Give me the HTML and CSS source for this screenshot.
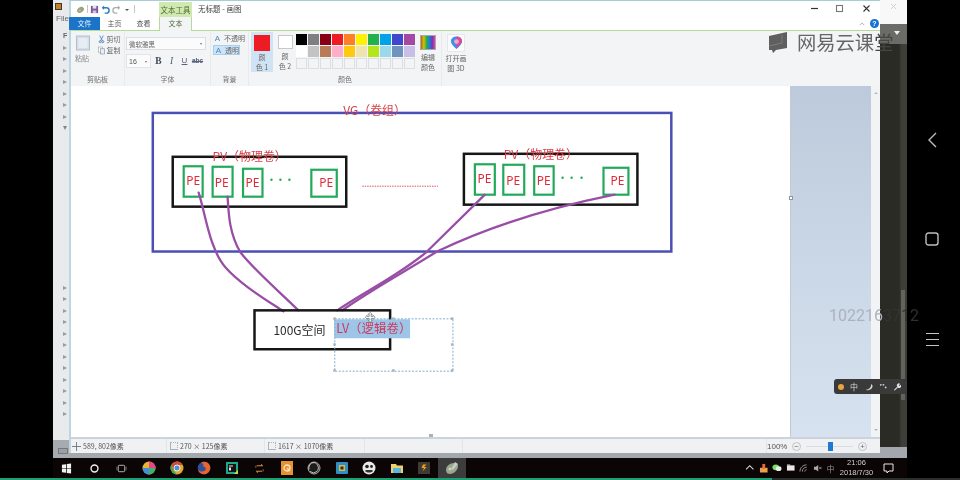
FILE: index.html
```html
<!DOCTYPE html>
<html lang="zh-CN">
<head>
<meta charset="utf-8">
<title>无标题 - 画图</title>
<link rel="stylesheet" href="styles.css">
</head>
<body>
<div class="screen">
  <div class="main">
    <div class="black-side"></div>
    <div class="desktop">
      <div class="desk-row">
        <aside class="strip">
          <div class="strip-top">
            <span class="app-dot"></span>
            <span class="file-word">File</span>
            <span class="fc-word">F</span>
          </div>
          <div class="arrows arrows-a">
            <i class="arr"></i><i class="arr"></i><i class="arr"></i><i class="arr"></i><i class="arr"></i><i class="arr"></i><i class="arr"></i><i class="arr arr-d"></i>
          </div>
          <div class="arrows arrows-b">
            <i class="arr"></i><i class="arr"></i><i class="arr"></i><i class="arr"></i><i class="arr"></i><i class="arr"></i><i class="arr"></i><i class="arr"></i><i class="arr"></i><i class="arr"></i><i class="arr"></i><i class="arr"></i>
          </div>
          <div class="strip-bottom"><span class="strip-btn"></span></div>
        </aside>

        <section class="window">
          <div class="titlebar">
            <div class="qat">
              <svg class="qi" viewBox="0 0 10 10"><path d="M1 7c0-3 3-5 6-5l2 2c0 3-3 5-6 5z" fill="#98a27e"/><circle cx="4" cy="6" r="1.4" fill="#c9b58c"/></svg>
              <span class="qsep"></span>
              <svg class="qi" viewBox="0 0 10 10"><path d="M1 1h8v8H1z" fill="#7a5a9c"/><path d="M3 1h4v3H3z" fill="#e6e0ee"/><path d="M3 6h4v3H3z" fill="#cfc4dc"/></svg>
              <svg class="qi" viewBox="0 0 10 10"><path d="M2 3h4a3 3 0 0 1 0 6H4" fill="none" stroke="#2b7cc4" stroke-width="1.6"/><path d="M3.5 0.5v5L0.8 3z" fill="#2b7cc4"/></svg>
              <svg class="qi" viewBox="0 0 10 10"><path d="M8 3H4a3 3 0 0 0 0 6h2" fill="none" stroke="#a8acb2" stroke-width="1.4"/><path d="M6.500 0.5v5L9.200 3z" fill="#a8acb2"/></svg>
              <span class="qdrop"></span>
              <span class="qsep"></span>
            </div>
            <div class="ctx-tab">文本工具</div>
            <div class="doc-title">无标题 - 画图</div>
            <div class="win-controls">
              <svg class="wc wc-min" viewBox="0 0 9 9"><path d="M1 4.500h7" stroke="#333" stroke-width="1.200"/></svg>
              <svg class="wc wc-max" viewBox="0 0 9 9"><rect x="1.500" y="1.500" width="6" height="6" fill="none" stroke="#777" stroke-width="1.100"/></svg>
              <svg class="wc" viewBox="0 0 9 9"><path d="M1.500 1.500l6 6M7.500 1.500l-6 6" stroke="#333" stroke-width="1.100"/></svg>
            </div>
          </div>

          <div class="tabs">
            <div class="tab tab-file">文件</div>
            <div class="tab tab-plain">主页</div>
            <div class="tab tab-plain tab-view">查看</div>
            <div class="tab tab-text">文本</div>
            <div class="tab-help">
              <svg class="caret-up" viewBox="0 0 8 5"><path d="M1 4l3-3 3 3" fill="none" stroke="#9a9a9a"/></svg>
              <span class="help">?</span>
            </div>
          </div>

          <div class="ribbon">
            <div class="group g-clip">
              <div class="g-body clip-body">
                <div class="paste">
                  <svg class="paste-ico" viewBox="0 0 15 16"><rect x="1" y="1" width="13" height="14" fill="#d6dee8" stroke="#b4bfcc"/><rect x="3" y="3" width="9" height="10" fill="#e7edf4"/></svg>
                  <span>粘贴</span>
                </div>
                <div class="clip-list">
                  <div class="clip-item">
                    <svg class="ci" viewBox="0 0 8 9"><path d="M2 0l3 6M6 0L3 6" stroke="#4f86bd" stroke-width="1"/><circle cx="2.500" cy="7" r="1.200" fill="none" stroke="#4f86bd"/><circle cx="5.500" cy="7" r="1.200" fill="none" stroke="#4f86bd"/></svg>
                    <span>剪切</span>
                  </div>
                  <div class="clip-item">
                    <svg class="ci" viewBox="0 0 8 9"><rect x="0.500" y="0.500" width="4.500" height="6" fill="#fff" stroke="#a3adb8" stroke-width=".8"/><rect x="3" y="2.500" width="4.500" height="6" fill="#e8eef5" stroke="#8d99a8" stroke-width=".8"/></svg>
                    <span>复制</span>
                  </div>
                </div>
              </div>
              <div class="g-label">剪贴板</div>
            </div>

            <div class="group g-font">
              <div class="g-body font-body">
                <div class="font-select"><span>微软雅黑</span><i class="mini-drop"></i></div>
                <div class="font-row">
                  <div class="size-select"><span>16</span><i class="mini-drop"></i></div>
                  <b class="fmt fmt-b">B</b>
                  <i class="fmt fmt-i">I</i>
                  <u class="fmt fmt-u">U</u>
                  <s class="fmt fmt-s">abc</s>
                </div>
              </div>
              <div class="g-label">字体</div>
            </div>

            <div class="group g-bg">
              <div class="g-body bg-body">
                <div class="bg-opt"><span class="bg-ico">A</span><span>不透明</span></div>
                <div class="bg-opt bg-sel"><span class="bg-ico">A</span><span>透明</span></div>
              </div>
              <div class="g-label">背景</div>
            </div>

            <div class="group g-color">
              <div class="g-body color-body">
                <div class="swatch-btn swatch-on">
                  <span class="big-swatch sw-red"></span>
                  <span class="sw-text">颜<br>色 1</span>
                </div>
                <div class="swatch-btn swatch-two">
                  <span class="big-swatch sw-white"></span>
                  <span class="sw-text">颜<br>色 2</span>
                </div>
                <div class="palette">
                  <i class="p p1"></i><i class="p p2"></i><i class="p p3"></i><i class="p p4"></i><i class="p p5"></i><i class="p p6"></i><i class="p p7"></i><i class="p p8"></i><i class="p p9"></i><i class="p p10"></i>
                  <i class="p p11"></i><i class="p p12"></i><i class="p p13"></i><i class="p p14"></i><i class="p p15"></i><i class="p p16"></i><i class="p p17"></i><i class="p p18"></i><i class="p p19"></i><i class="p p20"></i>
                  <i class="p"></i><i class="p"></i><i class="p"></i><i class="p"></i><i class="p"></i><i class="p"></i><i class="p"></i><i class="p"></i><i class="p"></i><i class="p"></i>
                </div>
                <div class="edit-colors">
                  <span class="rainbow"></span>
                  <span class="sw-text">编辑<br>颜色</span>
                </div>
              </div>
              <div class="g-label">颜色</div>
            </div>

            <div class="group g-3d">
              <div class="g-body d3-body">
                <span class="d3-box">
                  <svg class="d3-ico" viewBox="0 0 14 15"><path d="M7 14C3 10 1 8 1 5.500a6 5 0 0 1 12 0C13 8 11 10 7 14z" fill="#3d8fe8"/><path d="M7 14C9 9 13 8 13 5.500A6 5 0 0 0 7 .5z" fill="#e2488f"/><circle cx="7" cy="6" r="2.600" fill="#f6a4cf"/></svg>
                </span>
                <span class="sw-text">打开画<br>图 3D</span>
              </div>
            </div>
          </div>

          <div class="work">
            <div class="canvas">
              <svg class="diagram" viewBox="71 86 719 352">
                <rect class="vg" x="152" y="113" width="520" height="139"/>
                <text class="lbl" x="343" y="115">VG（卷组）</text>

                <rect class="box" x="172" y="157" width="174" height="50"/>
                <text class="lbl" x="212" y="161">PV（物理卷）</text>
                <rect class="pe" x="183" y="166.500" width="19" height="30.500"/>
                <rect class="pe" x="212" y="167" width="20" height="30"/>
                <rect class="pe" x="242.500" y="169" width="19.500" height="28"/>
                <rect class="pe" x="311" y="170" width="25.500" height="27"/>
                <text class="pet" x="192.500" y="185.500">PE</text>
                <text class="pet" x="221" y="187.500">PE</text>
                <text class="pet" x="252" y="187.500">PE</text>
                <text class="pet" x="326" y="187.500">PE</text>
                <circle class="dot" cx="271" cy="180" r="1.200"/><circle class="dot" cx="280" cy="180" r="1.200"/><circle class="dot" cx="289" cy="180" r="1.200"/>

                <path class="dotted" d="M362 186.500H438"/>

                <rect class="box" x="464" y="154" width="174" height="51"/>
                <text class="lbl" x="504" y="159">PV（物理卷）</text>
                <rect class="pe" x="475" y="164.500" width="20" height="30.500"/>
                <rect class="pe" x="503.500" y="165" width="21" height="30"/>
                <rect class="pe" x="534.500" y="166.500" width="19.500" height="28.500"/>
                <rect class="pe" x="604" y="168" width="25" height="27"/>
                <text class="pet" x="484.500" y="183.500">PE</text>
                <text class="pet" x="513.500" y="185.500">PE</text>
                <text class="pet" x="544" y="185.500">PE</text>
                <text class="pet" x="618" y="185.500">PE</text>
                <circle class="dot" cx="563" cy="178" r="1.200"/><circle class="dot" cx="572" cy="178" r="1.200"/><circle class="dot" cx="582" cy="178" r="1.200"/>

                <path class="link" d="M198 193C205 215 209 250 225 268C240 285 265 300 283 312"/>
                <path class="link" d="M227 197C228 215 229 235 240 253C255 272 280 293 298 311"/>
                <path class="link" d="M485 195L427 252C400 275 365 292 337 311"/>
                <path class="link" d="M615 195C560 206 500 222 437 252C405 272 370 291 342 311"/>

                <rect class="box" x="254" y="311" width="136" height="39"/>
                <text class="blk" x="273" y="336">100G空间</text>

                <rect class="hl" x="334" y="320" width="76" height="19"/>
                <text class="lv" x="336" y="334">LV（逻辑卷）</text>
                <rect class="sel" x="334.500" y="319.500" width="118.500" height="52.500"/>
                <g class="hd">
                  <rect x="333" y="318" width="2.500" height="2.500"/><rect x="392" y="318" width="2.500" height="2.500"/><rect x="451" y="318" width="2.500" height="2.500"/>
                  <rect x="333" y="344" width="2.500" height="2.500"/><rect x="451" y="344" width="2.500" height="2.500"/>
                  <rect x="333" y="370" width="2.500" height="2.500"/><rect x="392" y="370" width="2.500" height="2.500"/><rect x="451" y="370" width="2.500" height="2.500"/>
                  <rect x="429" y="435" width="4" height="3"/>
                </g>
                <path class="mv" d="M370 313l2 2h-1v2h2v-1l2 2-2 2v-1h-2v2h1l-2 2-2-2h1v-2h-2v1l-2-2 2-2v1h2v-2h-1z"/>
              </svg>
            </div>
            <div class="workspace"><span class="ws-handle"></span></div>
            <div class="vscroll"><i class="vs-up"></i><i class="vs-down"></i></div>
          </div>

          <div class="canvas-edge"></div>

          <div class="status">
            <div class="st st-a">
              <svg class="st-ico" viewBox="0 0 9 9"><path d="M4.500 0v9M0 4.500h9" stroke="#6c7480" stroke-width=".9"/></svg>
              <span>589, 802像素</span>
            </div>
            <div class="st st-b"><span class="st-rect"></span><span>270 × 125像素</span></div>
            <div class="st st-c"><span class="st-rect"></span><span>1617 × 1070像素</span></div>
            <div class="st st-d"></div>
            <div class="st st-e"></div>
            <div class="zoom">
              <span class="zoom-pct">100%</span>
              <span class="zoom-btn">−</span>
              <span class="slider"><i class="thumb"></i></span>
              <span class="zoom-btn">+</span>
            </div>
          </div>
          <div class="win-foot"></div>
        </section>

        <aside class="rail">
          <div class="rail-top">
            <svg class="rail-x" viewBox="0 0 7 7"><path d="M1 1l5 5M6 1L1 6" stroke="#d2d2d2"/></svg>
          </div>
          <div class="rail-grey"><i class="rail-tri"></i></div>
          <div class="rail-dark"><i class="rail-thumb"></i></div>
          <div class="rail-foot"></div>
        </aside>
      </div>

      <div class="taskbar">
        <div class="tb-item"><svg class="tbi" viewBox="0 0 12 12"><path d="M1 2l4.500-.7V5.700H1zM6.300 1.200L11 .5v5.200H6.300zM1 6.400h4.500v4.300L1 10zM6.300 6.400H11v5.100l-4.700-.7z" fill="#f2f2f2"/></svg></div>
        <div class="tb-item"><svg class="tbi" viewBox="0 0 12 12"><circle cx="6" cy="6" r="3.800" fill="none" stroke="#f0f0f0" stroke-width="1.500"/></svg></div>
        <div class="tb-item"><svg class="tbi" viewBox="0 0 12 12"><rect x="2.500" y="2.500" width="7" height="7" rx="1" fill="none" stroke="#bdbdbd"/><path d="M1 4v4M11 4v4" stroke="#777"/></svg></div>
        <div class="tb-item"><svg class="tbi tbi-lg" viewBox="0 0 14 14"><circle cx="7" cy="7" r="6.500" fill="#e8b52c"/><path d="M7 .5A6.500 6.500 0 0 1 13.500 7H7z" fill="#e8458e"/><path d="M13.500 7A6.500 6.500 0 0 1 7 13.500V7z" fill="#45b06a"/><path d="M7 13.500A6.500 6.500 0 0 1 .5 7H7z" fill="#3f8fe0"/></svg></div>
        <div class="tb-item"><svg class="tbi tbi-lg" viewBox="0 0 14 14"><circle cx="7" cy="7" r="6.500" fill="#e0a82e"/><path d="M7 .5A6.500 6.500 0 0 1 12.700 4H7L3.600 9.500 1.600 3.500A6.500 6.500 0 0 1 7 .5z" fill="#d9483b"/><path d="M3.600 9.500L7 13.500A6.500 6.500 0 0 1 .5 7c0-1.300.4-2.500 1.100-3.500z" fill="#3ea85a"/><circle cx="7" cy="7" r="3" fill="#4a8fe0" stroke="#fff" stroke-width=".8"/></svg></div>
        <div class="tb-item"><svg class="tbi tbi-lg" viewBox="0 0 14 14"><circle cx="7" cy="7" r="6.300" fill="#2d4f9e"/><path d="M7 .7c4 0 6.300 3 6.300 6.300S10 13.300 7 13.300c-3.500 0-5.500-2.300-6-4.500C3 11 6 11 8 9.500 9.500 8 8.500 5.500 6 5.500 7 3.500 6 2 4 2 5 1 6 .7 7 .7z" fill="#e9652a"/></svg></div>
        <div class="tb-item"><svg class="tbi tbi-lg" viewBox="0 0 14 14"><rect x="1" y="1" width="12" height="12" fill="#1fa88a"/><rect x="3" y="3" width="8" height="8" fill="#121212"/><rect x="4" y="4.500" width="4" height="1" fill="#e8e8e8"/><rect x="4" y="6.500" width="2" height="3" fill="#e8e8e8"/><path d="M9 13l4-4v4z" fill="#d4d92e"/></svg></div>
        <div class="tb-item"><svg class="tbi" viewBox="0 0 12 12"><path d="M3 3h6l-1-1.500M9 9H3l1 1.500" fill="none" stroke="#d98a3a" stroke-width="1.100"/><path d="M2 3v2M10 7v2" stroke="#888"/></svg></div>
        <div class="tb-item"><svg class="tbi tbi-lg" viewBox="0 0 14 14"><rect x="1" y="0" width="12" height="14" fill="#e8922e"/><circle cx="7" cy="7" r="3" fill="none" stroke="#fbe3c4" stroke-width="1.300"/><path d="M7 7l3 3" stroke="#fbe3c4" stroke-width="1.300"/></svg></div>
        <div class="tb-item"><svg class="tbi tbi-lg" viewBox="0 0 14 14"><circle cx="7" cy="7" r="6" fill="#1c1c1c" stroke="#a8a8a8"/><path d="M7 1.500a5.500 5.500 0 0 1 3 9M2 8.500a5.500 5.500 0 0 1 5-7M3 10.500a5.500 5.500 0 0 0 7 0" fill="none" stroke="#d0d0d0" stroke-width=".9"/></svg></div>
        <div class="tb-item"><svg class="tbi tbi-lg" viewBox="0 0 14 14"><rect x="1" y="1" width="12" height="12" rx="1" fill="#2e8fc8"/><rect x="4" y="4" width="6" height="6" fill="#e8b72e"/><rect x="5.500" y="5.500" width="3" height="3" fill="#1c3040"/></svg></div>
        <div class="tb-item"><svg class="tbi tbi-lg" viewBox="0 0 14 14"><circle cx="7" cy="7" r="6.500" fill="#e8e8e8"/><circle cx="5" cy="5.500" r="1.800" fill="#222"/><circle cx="9.500" cy="5.500" r="1.400" fill="#222"/><path d="M3 10c2 2 6 2 8 0l-1-1H4z" fill="#333"/></svg></div>
        <div class="tb-item"><svg class="tbi tbi-lg" viewBox="0 0 14 14"><path d="M1 3h5l1 1.500h6V12H1z" fill="#f0d070"/><rect x="3" y="7" width="8" height="5" fill="#58b8d8"/></svg></div>
        <div class="tb-item"><svg class="tbi tbi-lg" viewBox="0 0 14 14"><rect x="1" y="1" width="12" height="12" fill="#3f3a34"/><path d="M9.500 3.500H6L4.500 7H7l-1.500 3.500L9.500 6H7z" fill="#f0a020"/></svg></div>
        <div class="tb-item tb-active"><svg class="tbi tbi-lg" viewBox="0 0 14 14"><path d="M1 9c0-4 4-7 8-7 2 0 4 1 4 3 0 4-4 8-8 8-2 0-4-1-4-4z" fill="#98a88c"/><circle cx="5" cy="8" r="1.500" fill="#d8d0b0"/><path d="M10 1l3 2-5 6-2-1z" fill="#c8c8c8"/></svg></div>

        <div class="tray">
          <svg class="tr" viewBox="0 0 9 9"><path d="M1 6l3.500-3.500L8 6" fill="none" stroke="#d8d8d8"/></svg>
          <svg class="tr" viewBox="0 0 10 10"><rect x="1" y="5" width="8" height="5" fill="#e8a24a"/><rect x="3.500" y="1" width="3" height="5" fill="#e86a3a"/></svg>
          <svg class="tr" viewBox="0 0 10 10"><ellipse cx="4" cy="4.500" rx="3.500" ry="3" fill="#7fdc6a"/><ellipse cx="7" cy="6" rx="3" ry="2.500" fill="#e4f5df"/></svg>
          <svg class="tr" viewBox="0 0 10 10"><rect x="1" y="2.500" width="8" height="5.500" fill="#e8e8e8"/><rect x="1" y="1.500" width="3.500" height="1.500" fill="#bcbcbc"/></svg>
          <svg class="tr" viewBox="0 0 10 10"><path d="M1 9c0-4 3-7 7-7M3.500 9c0-3 2-4.500 4.500-4.500M6 9c0-1 1-2 2-2" fill="none" stroke="#9a9a9a"/></svg>
          <svg class="tr" viewBox="0 0 10 10"><path d="M1 4h2l2.500-2v7L3 7H1z" fill="#aaa"/><path d="M6.500 4l2.500 2.500M9 4L6.500 6.500" stroke="#aaa" stroke-width=".8"/></svg>
          <span class="tr-text">中</span>
          <div class="clock"><span>21:06</span><span>2018/7/30</span></div>
          <svg class="notify" viewBox="0 0 11 11"><path d="M1 1h9v7H6L4 10V8H1z" fill="none" stroke="#e8e8e8"/></svg>
        </div>
      </div>
    </div>
    <div class="nav">
      <svg class="nav-back" viewBox="0 0 9 16"><path d="M8 1L1 8l7 7" fill="none" stroke="#bdbdbd" stroke-width="1.400"/></svg>
      <svg class="nav-home" viewBox="0 0 14 14"><rect x="1" y="1" width="12" height="12" rx="2.500" fill="none" stroke="#bdbdbd" stroke-width="1.400"/></svg>
      <div class="nav-menu"><i></i><i></i><i></i></div>
    </div>
  </div>
  <div class="progress"><i class="progress-fill"></i></div>

  <div class="watermark">
    <svg class="wm-logo" viewBox="0 0 20 21"><path d="M1 4L19 0V16L8 18L5 21L4 18H1z" fill="#5f5f5f"/><path d="M1 14L14 11V3" fill="none" stroke="#8a8a8a" stroke-width=".7"/></svg>
    <span class="wm-text">网易云课<span class="wm-last">堂</span></span>
  </div>
  <div class="user-id">102216<span class="user-id-dim">371</span><span class="user-id-end">2</span></div>
  <div class="ime">
    <i class="ime-dot"></i>
    <span class="ime-zh">中</span>
    <svg class="ime-ico" viewBox="0 0 9 9"><path d="M7 1C7 5 5 7 1 7.500 4 9 8.500 7.500 8.500 3.500 8.500 2.500 8 1.500 7 1z" fill="#d6d6d6"/></svg>
    <svg class="ime-ico" viewBox="0 0 9 9"><circle cx="2" cy="2" r="1" fill="#d6d6d6"/><circle cx="5" cy="2" r="1" fill="#d6d6d6"/><circle cx="7.500" cy="5" r="1" fill="#d6d6d6"/></svg>
    <svg class="ime-ico" viewBox="0 0 9 9"><path d="M1 8l4-4a2 2 0 0 1 3-3L6.500 2.500l.8.800L8.500 2a2 2 0 0 1-3 3L2 8.500z" fill="#e2e2e2"/></svg>
  </div>
</div>
</body>
</html>
```

FILE: styles.css
```css
* { box-sizing: border-box; }
html, body { margin: 0; padding: 0; background: #000; }
body { width: 960px; height: 480px; overflow: hidden; }
i { display: block; font-style: normal; }

.screen {
  position: relative;
  width: 960px;
  height: 480px;
  overflow: hidden;
  background: #000;
  font-family: "Noto Sans CJK SC", "Noto Sans", sans-serif;
  filter: blur(0.4px);
}
.main { display: flex; height: 478px; }
.black-side { width: 53px; background: #000; }
.desktop { width: 854px; display: flex; flex-direction: column; }
.desk-row { display: flex; height: 458px; }
.nav {
  width: 53px;
  display: flex;
  flex-direction: column;
  align-items: center;
  background: #000;
  padding: 132px 3px 0 0;
}
.nav-back { width: 9px; height: 16px; }
.nav-home { width: 14px; height: 14px; margin-top: 84px; }
.nav-menu { margin-top: 87px; display: flex; flex-direction: column; gap: 5px; }
.nav-menu i { width: 13px; height: 1px; background: #c4c4c4; }

.progress { height: 2px; background: #2a2e2c; }
.progress-fill { width: 772px; height: 2px; background: #1fa074; }

/* left background app */
.strip {
  width: 16px;
  background: #e8eaec;
  display: flex;
  flex-direction: column;
  position: relative;
  overflow: hidden;
}
.strip-top { display: flex; flex-direction: column; height: 45.500px; flex: none; padding: 3px 0 0 2px; }
.app-dot { width: 7px; height: 7px; background: #c9801e; border: 1px solid #3a3a3a; }
.file-word { font: 8px/10px "Liberation Sans", sans-serif; color: #666; margin-top: 4px; margin-left: 1px; }
.fc-word { font: bold 7px/9px "Liberation Sans", sans-serif; color: #666; margin-top: 7px; margin-left: 8px; }
.arrows { display: flex; flex-direction: column; gap: 7.500px; padding-left: 10px; flex: none; }
.arrows-b { margin-top: 155.500px; }
.arr {
  width: 0;
  height: 0;
  border-left: 4px solid #979ba2;
  border-top: 2.500px solid transparent;
  border-bottom: 2.500px solid transparent;
}
.arr-d { border-left: 2.500px solid transparent; border-right: 2.500px solid transparent; border-top: 4px solid #80848a; border-bottom: 0; }
.strip-bottom { margin-top: auto; height: 18px; background: #a5abb0; display: flex; align-items: flex-end; padding-bottom: 4px; }
.strip-btn { width: 10px; height: 6px; margin-left: 5px; border: 1px solid #777; background: #9aa0a6; }

/* paint window */
.window {
  width: 811px;
  display: flex;
  flex-direction: column;
  background: #fff;
  border-top: 1px solid #a9cdd8;
  border-left: 2px solid #bcd6e6;
}
.titlebar { display: flex; height: 16px; align-items: flex-start; flex: none; }
.qat { width: 88px; height: 16px; display: flex; align-items: center; gap: 2px; padding-left: 5px; }
.qi { width: 9px; height: 9px; }
.qsep { width: 1px; height: 8px; background: #c6c6c6; }
.qdrop { width: 0; height: 0; border: 2px solid transparent; border-top: 2.500px solid #555; margin: 3px 3px 0 2px; }
.ctx-tab {
  width: 33px;
  height: 16px;
  margin-top: 1px;
  background: #cfe9ae;
  color: #4d6a3a;
  font-size: 7.500px;
  line-height: 16px;
  text-align: center;
}
.doc-title { margin-left: 6px; font-size: 7.500px; line-height: 16px; color: #444; }
.win-controls { margin-left: auto; display: flex; gap: 18px; padding: 3px 9px 0 0; }
.wc { width: 9px; height: 9px; }
.wc-min { margin-right: -2px; }

.tabs { display: flex; height: 14px; flex: none; border-bottom: 1px solid #b5dc96; position: relative; }
.tab { font-size: 7px; line-height: 13px; text-align: center; color: #555; white-space: nowrap; }
.tab-file { width: 31px; margin-left: -2px; background: #1a74c8; color: #e8f2fb; }
.tab-plain { width: 15px; margin-left: 7px; }
.tab-view { margin-left: 14px; }
.tab-text { width: 33px; margin-left: 8px; height: 14px; background: #f3f4f6; border: 1px solid #b5dc96; border-top: 0; border-bottom: 0; color: #4d6a3a; }
.tab-help { margin-left: auto; display: flex; align-items: center; gap: 5px; padding-right: 1px; height: 13px; }
.caret-up { width: 6px; height: 4px; }
.help { width: 9px; height: 9px; border-radius: 50%; background: #1572d3; color: #fff; font: bold 7px/9px "Liberation Sans", sans-serif; text-align: center; }

.ribbon { display: flex; height: 55px; flex: none; background: #f3f4f6; }
.group { display: flex; flex-direction: column; height: 55px; border-right: 1px solid #e9eaec; }
.g-body { flex: 1; min-height: 0; }
.g-label { height: 12px; flex: none; font-size: 7px; line-height: 11px; text-align: center; color: #6f6f6f; }
.sw-text { font-size: 7px; line-height: 9.500px; text-align: center; color: #666; }

.g-clip { width: 54px; }
.clip-body { display: flex; }
.paste { width: 24px; padding: 4px 0 0 4px; display: flex; flex-direction: column; font-size: 7px; line-height: 9px; color: #888; }
.paste-ico { width: 16px; height: 16px; margin-bottom: 3px; }
.clip-list { display: flex; flex-direction: column; gap: 1.500px; padding: 4px 0 0 3px; }
.clip-item { display: flex; align-items: center; gap: 1.500px; font-size: 7px; line-height: 9px; color: #666; }
.ci { width: 7px; height: 9px; }

.g-font { width: 86px; }
.font-body { display: flex; flex-direction: column; padding: 6px 0 0 1px; }
.font-select {
  width: 80px;
  height: 13px;
  border: 1px solid #dcdee2;
  background: #fbfbfc;
  display: flex;
  align-items: center;
  justify-content: space-between;
  padding: 0 3px 0 2px;
  font-size: 6.500px;
  color: #666;
}
.mini-drop { width: 0; height: 0; border: 1.500px solid transparent; border-top: 2px solid #777; margin-top: 2px; }
.font-row { display: flex; align-items: center; margin-top: 4px; }
.size-select {
  width: 25px;
  height: 14px;
  background: #fbfbfc;
  border: 1px solid #e2e4e8;
  display: flex;
  align-items: center;
  justify-content: space-between;
  padding: 0 3px 0 2px;
  font: 7px "Liberation Sans", sans-serif;
  color: #555;
}
.fmt { width: 13px; text-align: center; font-family: "Liberation Serif", serif; font-size: 9.500px; line-height: 14px; color: #55617a; }
.fmt-b { margin-left: 1px; font-weight: bold; color: #3c4656; }
.fmt-i { font-style: italic; }
.fmt-u { font-family: "Liberation Sans", sans-serif; font-size: 8px; }
.fmt-s { font-family: "Liberation Sans", sans-serif; font-size: 6.500px; font-weight: bold; }

.g-bg { width: 38px; }
.bg-body { display: flex; flex-direction: column; padding: 2px 0 0 2px; gap: 2px; }
.bg-opt { display: flex; align-items: center; gap: 2px; height: 10px; font-size: 7px; color: #666; width: 32px; }
.bg-sel { width: 27px; background: #cce4f7; border: 1px solid #a8cfee; }
.bg-ico { width: 9px; font: 8px/9px "Liberation Sans", sans-serif; color: #4f86bd; text-align: center; }

.g-color { width: 193px; }
.color-body { display: flex; padding-left: 2px; }
.swatch-btn { display: flex; flex-direction: column; align-items: center; width: 22px; height: 41px; padding-top: 3px; }
.swatch-on { background: #cfe3f5; height: 40px; margin-top: 1px; }
.swatch-two { width: 20px; margin-left: 2px; padding-top: 4px; }
.big-swatch { display: block; flex: none; margin-bottom: 2px; }
.sw-red { width: 16px; height: 16px; background: #ed1c24; }
.sw-white { width: 15px; height: 14px; background: #fff; border: 1px solid #c8c8c8; margin-bottom: 3px; }
.palette { display: grid; grid-template-columns: repeat(10, 11px); grid-template-rows: repeat(3, 11px); gap: 1px; margin: 3px 0 0 1px; }
.p { background: #f3f4f6; border: 1px solid #dcdee2; }
.p1 { background: #000; border: 0; } .p2 { background: #7f7f7f; border: 0; } .p3 { background: #880015; border: 0; } .p4 { background: #ed1c24; border: 0; } .p5 { background: #ff7f27; border: 0; }
.p6 { background: #fff200; border: 0; } .p7 { background: #22b14c; border: 0; } .p8 { background: #00a2e8; border: 0; } .p9 { background: #3f48cc; border: 0; } .p10 { background: #a349a4; border: 0; }
.p11 { background: #fff; border: 0; } .p12 { background: #c3c3c3; border: 0; } .p13 { background: #b97a57; border: 0; } .p14 { background: #ffaec9; border: 0; } .p15 { background: #ffc90e; border: 0; }
.p16 { background: #efe4b0; border: 0; } .p17 { background: #b5e61d; border: 0; } .p18 { background: #99d9ea; border: 0; } .p19 { background: #7092be; border: 0; } .p20 { background: #c8bfe7; border: 0; }
.edit-colors { display: flex; flex-direction: column; align-items: center; width: 22px; margin-left: 2px; padding-top: 4px; }
.rainbow { display: block; width: 16px; height: 15px; margin-bottom: 3px; border: 1px solid #a8a8a8; background: linear-gradient(90deg, #b5651d, #d8c000, #22b14c, #1c7ed6, #7b2fbe, #e0489a); }

.g-3d { width: 28px; border-right: 0; }
.d3-body { display: flex; flex-direction: column; align-items: center; padding-top: 3px; }
.d3-box { display: flex; align-items: center; justify-content: center; width: 18px; height: 18px; background: #fbfbfc; border: 1px solid #e6e7ea; margin-bottom: 2px; }
.d3-ico { width: 13px; height: 14px; }

.work { display: flex; height: 351px; flex: none; }
.canvas { width: 719px; background: #fff; }
.diagram { display: block; width: 719px; height: 351px; }
.vg { fill: none; stroke: #4a4fb5; stroke-width: 2.500; }
.box { fill: none; stroke: #161616; stroke-width: 2.500; }
.pe { fill: #fff; stroke: #22a95a; stroke-width: 2.200; }
.lbl { fill: #d9404a; font-size: 12px; }
.pet { fill: #dc2c3a; font-family: "Noto Sans", sans-serif; font-size: 12px; text-anchor: middle; }
.dot { fill: #22a95a; }
.dotted { stroke: #e0555e; stroke-width: 1; stroke-dasharray: 1.500 1; fill: none; }
.link { fill: none; stroke: #994ea6; stroke-width: 2.300; stroke-linecap: round; }
.blk { fill: #2a2a2a; font-size: 12px; }
.hl { fill: #9cc5e8; }
.lv { fill: #cf3a5c; font-size: 12.500px; }
.sel { fill: none; stroke: #80aed0; stroke-width: 1; stroke-dasharray: 2 1.500; }
.hd rect { fill: #aab3bc; }
.mv { fill: #fff; stroke: #6f7880; stroke-width: .8; }

.workspace {
  width: 81px;
  position: relative;
  background: linear-gradient(180deg, #bccadb 0%, #c9d6e5 45%, #d6e2ef 100%);
  border-left: 1px solid #c2cad6;
}
.ws-handle { position: absolute; left: -2px; top: 110px; width: 4px; height: 4px; background: #fff; border: 1px solid #8c96a0; }
.vscroll { width: 9px; background: #f2f3f5; display: flex; flex-direction: column; justify-content: space-between; align-items: center; padding: 4px 0; }
.vs-up { width: 0; height: 0; border: 2px solid transparent; border-bottom: 2px solid #b4b8bd; }
.vs-down { width: 0; height: 0; border: 2px solid transparent; border-top: 2px solid #b4b8bd; }

.canvas-edge { height: 2px; flex: none; background: #ccd3dc; }

.status { display: flex; height: 14px; flex: none; background: #eff1f3; font-size: 7px; color: #555; }
.st { display: flex; align-items: center; gap: 2px; height: 14px; border-right: 1px solid #e3e5e8; white-space: nowrap; }
.st-a { width: 96px; padding-left: 1px; }
.st-b { width: 98px; padding-left: 3px; }
.st-c { width: 100px; padding-left: 3px; }
.st-d { width: 98px; }
.st-e { width: 304px; }
.st-ico { width: 9px; height: 9px; }
.st-rect { width: 8px; height: 8px; border: 1px solid #aab2bc; border-top-style: dotted; border-right-style: dotted; }
.zoom { display: flex; align-items: center; flex: 1; gap: 5px; }
.zoom-pct { font: 8px "Liberation Sans", sans-serif; color: #555; width: 20px; }
.zoom-btn { width: 9px; height: 9px; border-radius: 50%; border: 1px solid #c0c4c8; font: 8px/7px "Liberation Sans", sans-serif; text-align: center; color: #666; }
.slider { display: block; width: 47px; height: 1px; background: #dadde0; position: relative; }
.thumb { position: absolute; left: 22px; top: -4px; width: 5px; height: 9px; background: #1f78d1; }
.win-foot { flex: 1; background: #a2a8ae; margin-left: -2px; }

/* right rail */
.rail { width: 27px; display: flex; flex-direction: column; }
.rail-top { height: 24px; flex: none; background: #f8f8f8; display: flex; justify-content: center; padding-top: 3px; }
.rail-x { width: 7px; height: 7px; }
.rail-grey { height: 20px; flex: none; background: #6b6b67; padding: 7px 0 0 14px; }
.rail-tri { width: 0; height: 0; border: 3px solid transparent; border-top: 4px solid #f0f0f0; }
.rail-dark { flex: 1; position: relative; background: linear-gradient(90deg, #2b2b26 0%, #2b2b26 70%, #3e3e39 80%, #3e3e39 100%); }
.rail-thumb { position: absolute; left: 21px; top: 246px; width: 4px; height: 110px; background: #63635e; }
.rail-foot { height: 11px; flex: none; background: #a2a8ae; }

/* taskbar */
.taskbar { display: flex; flex: 1; align-items: stretch; background: #0b0505; }
.tb-item { width: 27.500px; display: flex; align-items: center; justify-content: center; }
.tb-active { background: #3c3c3c; }
.tbi { width: 11px; height: 11px; }
.tbi-lg { width: 14px; height: 14px; }
.tray { margin-left: auto; display: flex; align-items: center; gap: 4px; padding-right: 13px; }
.tr { width: 9.500px; height: 9.500px; }
.tr-text { font-size: 7.500px; color: #999; width: 9px; text-align: center; }
.clock { width: 42px; margin-left: -3.500px; display: flex; flex-direction: column; align-items: center; font: 7.500px/10px "Liberation Sans", sans-serif; color: #cfcfcf; }
.notify { width: 11px; height: 11px; margin-left: 1.500px; }

/* overlays */
.watermark { position: absolute; left: 768px; top: 32px; display: flex; align-items: center; gap: 9px; }
.wm-logo { width: 20px; height: 21px; }
.wm-text { font-size: 19.300px; line-height: 21px; color: #666; white-space: nowrap; }
.wm-last { color: #454541; }
.user-id { position: absolute; left: 829px; top: 305px; font: 16px/21px Roboto, sans-serif; color: #aab2bd; }
.user-id-dim { color: #333330; }
.user-id-end { color: #303030; }
.ime {
  position: absolute;
  left: 834px;
  top: 379px;
  width: 73px;
  height: 15px;
  display: flex;
  align-items: center;
  gap: 6px;
  padding-left: 4px;
  background: #3a3a3a;
  border-radius: 3px 0 0 3px;
}
.ime-dot { width: 6px; height: 6px; border-radius: 50%; background: #e8a53a; }
.ime-zh { font-size: 8px; color: #d8d8d8; width: 8px; margin-right: 1px; }
.ime-ico { width: 8px; height: 8px; }
```
